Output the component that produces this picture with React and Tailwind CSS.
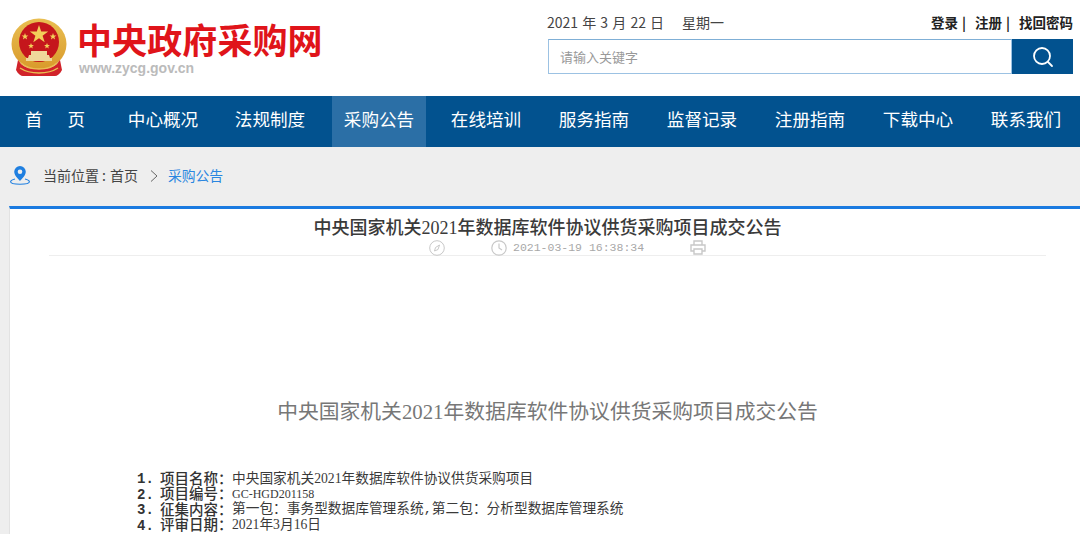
import React from "react";

const cjk = "font-['Microsoft_YaHei','Noto_Sans_CJK_SC',sans-serif]";
const nav = ["中心概况","法规制度","采购公告","在线培训","服务指南","监督记录","注册指南","下载中心","联系我们"];

function Emblem() {
  return (
    <svg width="56" height="60" viewBox="0 0 56 60" className="block">
      <defs>
        <linearGradient id="g" x1="0" y1="0" x2="0" y2="1">
          <stop offset="0" stopColor="#e9bf52" />
          <stop offset="1" stopColor="#d99a2b" />
        </linearGradient>
      </defs>
      <ellipse cx="28" cy="26" rx="27.5" ry="25.5" fill="url(#g)" />
      <circle cx="28" cy="24" r="20" fill="#c5161c" />
      <path d="M28 7l2.2 6.6h7l-5.6 4.1 2.1 6.6-5.700-4.100-5.700 4.100 2.100-6.600-5.600-4.100h7z" fill="#f3cf5a" />
      <path d="M14 15l.9 2.400 2.500.1-2 1.500.7 2.500-2.100-1.400-2.100 1.400.7-2.500-2-1.500 2.500-.1zM42 15l.9 2.400 2.500.1-2 1.500.7 2.500-2.100-1.400-2.100 1.400.7-2.500-2-1.500 2.500-.1zM20 25l.8 2 2.100.1-1.700 1.300.6 2.100-1.800-1.200-1.800 1.200.6-2.100-1.700-1.300 2.100-.1zM36 25l.8 2 2.100.1-1.700 1.300.6 2.100-1.800-1.200-1.800 1.200.6-2.100-1.700-1.300 2.100-.1z" fill="#f3cf5a" />
      <path d="M18 37h20l1 3H17zM20 33h16v4H20zM15 40h26v3H15z" fill="#efd89a" />
      <path d="M7 42c4 6 9 9 21 9s17-3 21-9l2 10c-2 4-5 6-7 6H12c-2 0-5-2-7-6z" fill="#d1232a" />
      <path d="M10 45c5 5 11 6 18 6s13-1 18-6M9 50c6 4 12 5 19 5s13-1 19-5" stroke="#e9bf52" strokeWidth="1.500" fill="none" />
    </svg>
  );
}

function Pin() {
  return (
    <svg width="20" height="20" viewBox="0 0 20 20" fill="none" className="block">
      <path d="M10 0a5.800 5.800 0 0 0-5.800 5.800C4.200 9.800 10 15 10 15s5.800-5.200 5.800-9.200A5.800 5.800 0 0 0 10 0z" fill="#1f7fe0" />
      <circle cx="10" cy="5.800" r="2.300" fill="#eeeeee" />
      <path d="M5 13C2.500 13.700 .6 14.600 .6 15.700c0 1.400 4.200 2.500 9.400 2.500s9.400-1.100 9.400-2.500c0-1.100-1.900-2-4.400-2.700" stroke="#1f7fe0" strokeWidth="1.100" />
    </svg>
  );
}

function D({ children, small }) {
  return <span className={"font-['Liberation_Serif',serif] " + (small ? "text-[12px]" : "text-[13.700px]")}>{children}</span>;
}

function Row({ n, label, children }) {
  return (
    <div className="flex h-[15.500px] items-center whitespace-nowrap">
      <span className="w-[23px] text-[14px] font-bold text-[#333333] font-['Liberation_Mono',monospace]">{n}.</span>
      <span className="text-[14.500px] font-medium text-[#333333] font-['Liberation_Serif','Noto_Sans_CJK_SC',serif]">{label}：</span>
      <span className="-ml-[0.5px] text-[13.700px] text-[#3a3a3a] font-['Liberation_Mono','Noto_Sans_CJK_SC',monospace]">{children}</span>
    </div>
  );
}

export default function App() {
  return (
    <div className={"h-[534px] w-[1080px] overflow-hidden bg-white " + cjk}>
      <header className="flex h-[96px] justify-between">
        <div className="flex pl-[11px] pt-[18px]">
          <Emblem />
          <div className="ml-[10px]">
            <div className="text-[35px] leading-[41px] font-bold tracking-[0.1px] text-[#e0141a] whitespace-nowrap">中央政府采购网</div>
            <div className="ml-[2px] mt-[1px] text-[14px] leading-[16px] text-[#bbbbbb] font-['Liberation_Sans',sans-serif] font-bold">www.zycg.gov.cn</div>
          </div>
        </div>
        <div className="w-[532px] pr-[7px] pt-[12px]">
          <div className="flex h-[20px] items-center justify-between">
            <div className="-ml-[1px] flex whitespace-pre text-[14px] text-[#444444] [word-spacing:1px]">
              <span>2021 年 3 月 22 日</span>
              <span className="ml-[18px]">星期一</span>
            </div>
            <div className="flex text-[13.500px] font-bold text-[#222222] whitespace-pre">
              <span>登录</span><span className="ml-[4px]">|</span>
              <span className="ml-[9px]">注册</span><span className="ml-[4px]">|</span>
              <span className="ml-[9px]">找回密码</span>
            </div>
          </div>
          <div className="mt-[7px] flex h-[35px]">
            <div className="flex flex-1 items-center border border-[#9cc2e3] border-t-[#7fafd6] pl-[11px] text-[13px] text-[#999999]">请输入关键字</div>
            <div className="flex w-[61px] items-center justify-center bg-[#02528f]">
              <svg width="22" height="22" viewBox="0 0 22 22" fill="none" stroke="white" strokeWidth="1.800" strokeLinecap="round">
                <circle cx="10" cy="10" r="8" />
                <path d="M16 16l4 4" />
              </svg>
            </div>
          </div>
        </div>
      </header>

      <nav className="grid h-[51px] grid-cols-10 bg-[#02528f]">
        <div className="flex translate-x-[1px] items-center justify-center gap-[25px] pb-[4px] text-[17.600px] text-white">
          <span>首</span><span>页</span>
        </div>
        {nav.map((t) => (
          <div key={t} className={"mx-[7px] flex items-center justify-center whitespace-nowrap pb-[4px] text-[17.600px] text-white " + (t === "采购公告" ? "translate-x-[1px] bg-[#2b6fa6]" : t === "中心概况" ? "translate-x-[1px]" : "")}>{t}</div>
        ))}
      </nav>

      <div className="flex h-[59px] items-center bg-[#eeeeee] pl-[10px] pb-[2px]">
        <Pin />
        <span className="ml-[13px] flex text-[14px] text-[#444444]">
          <span>当前位置</span><span className="mx-[3px]">:</span><span className="ml-[1px]">首页</span>
        </span>
        <svg width="8" height="14" viewBox="0 0 8 14" fill="none" stroke="#666666" className="ml-[12px]"><path d="M1 1.500l6 5.500-6 5.500" /></svg>
        <span className="ml-[10px] text-[13.800px] text-[#2a86e0]">采购公告</span>
      </div>

      <div className="flex bg-[#eeeeee] pl-[9px]">
        <main className="h-[328px] w-full border-l border-t-[3px] border-[#e2e2e2] border-t-[#1a7ae0] bg-white">
          <div className="ml-[39px] mr-[34px] h-[47px] border-b border-[#eeeeee]">
            <h1 className="pt-[8px] text-center text-[18px] leading-[23px] font-medium text-[#3a3a3a] font-['Liberation_Serif','Noto_Sans_CJK_SC',serif]">中央国家机关2021年数据库软件协议供货采购项目成交公告</h1>
            <div className="flex h-[15px] items-center text-[#aaaaaa]">
              <svg width="16" height="16" viewBox="0 0 16 16" fill="none" stroke="#c8c8c8" className="ml-[380px] shrink-0">
                <circle cx="8" cy="8" r="7.300" />
                <path d="M10.500 5l-4 2.500-1 3.500 3.500-1.500z" />
              </svg>
              <svg width="16" height="16" viewBox="0 0 16 16" fill="none" stroke="#c8c8c8" strokeWidth="1.200" className="ml-[46px] shrink-0">
                <circle cx="8" cy="8" r="7.200" />
                <path d="M8 3.500V8l3 2" />
              </svg>
              <span className="ml-[6px] text-[11.500px] leading-[15px] font-['Liberation_Mono',monospace] text-[#a8a8a8]">2021-03-19 16:38:34</span>
              <svg width="16" height="15" viewBox="0 0 16 15" fill="none" stroke="#c8c8c8" strokeWidth="1.400" className="ml-[46px] shrink-0">
                <path d="M4 5V1h8v4M4 11H1V5h14v6h-3M4 9h8v5H4z" />
              </svg>
            </div>
          </div>

          <h2 className="mt-[142px] pl-[5px] text-center text-[20.800px] leading-[28px] text-[#777777] font-['Liberation_Serif','Noto_Sans_CJK_SC',serif]">中央国家机关2021年数据库软件协议供货采购项目成交公告</h2>

          <div className="ml-[127px] mt-[46px]">
            <Row n="1" label="项目名称">中央国家机关<D>2021</D>年数据库软件协议供货采购项目</Row>
            <Row n="2" label="项目编号"><D small>GC-HGD201158</D></Row>
            <Row n="3" label="征集内容">第一包：事务型数据库管理系统,第二包：分析型数据库管理系统</Row>
            <Row n="4" label="评审日期"><D>2021</D>年<D>3</D>月<D>16</D>日</Row>
          </div>
        </main>
      </div>
    </div>
  );
}
